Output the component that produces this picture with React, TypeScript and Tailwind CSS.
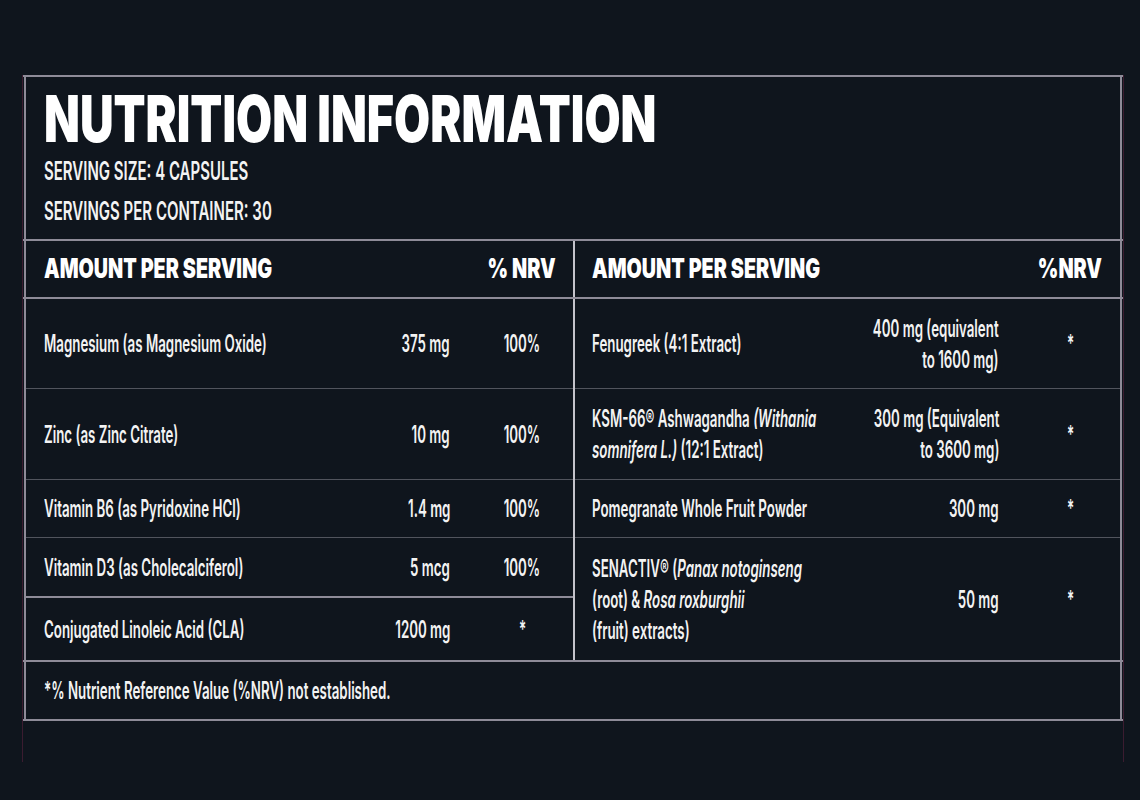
import React from "react";

const BODY =
  "inline-block whitespace-nowrap text-[24px] leading-[31px] font-semibold text-[#f3f3f3] scale-x-[0.555]";
const HEAD =
  "inline-block whitespace-nowrap text-[27px] leading-[32px] font-black text-white scale-x-[0.73]";

type Item = { h: string; name: React.ReactNode; amt: React.ReactNode; nrv: string };

const leftRows: Item[] = [
  { h: "h-[89px]", name: "Magnesium (as Magnesium Oxide)", amt: "375 mg", nrv: "100%" },
  { h: "h-[90px]", name: "Zinc (as Zinc Citrate)", amt: "10 mg", nrv: "100%" },
  { h: "h-[57px]", name: "Vitamin B6 (as Pyridoxine HCl)", amt: "1.4 mg", nrv: "100%" },
  { h: "h-[58px]", name: "Vitamin D3 (as Cholecalciferol)", amt: "5 mcg", nrv: "100%" },
];

const rightRows: Item[] = [
  {
    h: "h-[89px]",
    name: "Fenugreek (4:1 Extract)",
    amt: (
      <>
        400 mg (equivalent
        <br />
        to 1600 mg)
      </>
    ),
    nrv: "*",
  },
  {
    h: "h-[90px]",
    name: (
      <>
        KSM-66® Ashwagandha <i>(Withania</i>
        <br />
        <i>somnifera L.)</i> (12:1 Extract)
      </>
    ),
    amt: (
      <>
        300 mg (Equivalent
        <br />
        to 3600 mg)
      </>
    ),
    nrv: "*",
  },
  { h: "h-[57px]", name: "Pomegranate Whole Fruit Powder", amt: "300 mg", nrv: "*" },
  {
    h: "h-[122px]",
    name: (
      <>
        SENACTIV® (<i>Panax notoginseng</i>
        <br />
        (root) &amp; <i>Rosa roxburghii</i>
        <br />
        (fruit) extracts)
      </>
    ),
    amt: "50 mg",
    nrv: "*",
  },
];

function LeftRow({ r }: { r: Item }) {
  return (
    <div className={`flex w-[547px] items-center ${r.h}`}>
      <div className="w-0 min-w-0 flex-1 pl-[18px]">
        <span className={`${BODY} origin-left`}>{r.name}</span>
      </div>
      <div className="w-[140px] shrink-0 pr-[21px] text-right">
        <span className={`${BODY} origin-right`}>{r.amt}</span>
      </div>
      <div className="w-[102px] shrink-0 text-center">
        <span className={`${BODY} origin-center`}>{r.nrv}</span>
      </div>
    </div>
  );
}

function RightRow({ r }: { r: Item }) {
  return (
    <div className={`flex w-[545px] items-center ${r.h}`}>
      <div className="w-0 min-w-0 flex-1 pl-[17px]">
        <span className={`${BODY} origin-left`}>{r.name}</span>
      </div>
      <div className="w-[300px] shrink-0 pr-[21px] text-right">
        <span className={`${BODY} origin-right`}>{r.amt}</span>
      </div>
      <div className="w-[100px] shrink-0 text-center">
        <span className={`${BODY} origin-center`}>{r.nrv}</span>
      </div>
    </div>
  );
}

function Thin() {
  return <div className="h-px bg-[#51545d]" />;
}

function HLine() {
  return <div className="h-[2px] bg-[#8e8b98]" />;
}

export default function App() {
  return (
    <div className="min-h-[800px] w-full overflow-hidden bg-[#0f151d] pt-[75px] font-['Inter','Noto_Sans',sans-serif] text-white">
      <div className="ml-[22px] h-[687px] w-[1102px] border-x border-[#3b1c30]">
        <HLine />
        {/* header */}
        <div className="mx-px h-[162px] border-x-2 border-[#8e8b98] pl-[18px] pt-[10px]">
          <div>
            <span className="inline-block origin-left scale-x-[0.729] whitespace-nowrap text-[64px] leading-[64px] font-black text-white">
              NUTRITION INFORMATION
            </span>
          </div>
          <div>
            <span className="inline-block origin-left scale-x-[0.60] whitespace-nowrap text-[25px] leading-[40px] font-semibold text-[#f3f3f3]">
              SERVING SIZE: 4 CAPSULES
            </span>
          </div>
          <div>
            <span className="inline-block origin-left scale-x-[0.60] whitespace-nowrap text-[25px] leading-[40px] font-semibold text-[#f3f3f3]">
              SERVINGS PER CONTAINER: 30
            </span>
          </div>
        </div>
        <HLine />
        {/* column headers */}
        <div className="mx-px flex h-[56px] border-x-2 border-[#8e8b98]">
          <div className="flex w-[547px] shrink-0 items-center">
            <div className="w-0 min-w-0 flex-1 pl-[18px]">
              <span className={`${HEAD} origin-left`}>AMOUNT PER SERVING</span>
            </div>
            <div className="w-[102px] shrink-0 text-center">
              <span className={`${HEAD} origin-center`}>% NRV</span>
            </div>
          </div>
          <div className="w-[2px] shrink-0 bg-[#c4c3cb]" />
          <div className="flex w-[545px] shrink-0 items-center">
            <div className="w-0 min-w-0 flex-1 pl-[17px]">
              <span className={`${HEAD} origin-left`}>AMOUNT PER SERVING</span>
            </div>
            <div className="w-[100px] shrink-0 text-center">
              <span className={`${HEAD} origin-center`}>%NRV</span>
            </div>
          </div>
        </div>
        <HLine />
        {/* body */}
        <div className="mx-px flex h-[361px] border-x-2 border-[#8e8b98]">
          <div className="flex w-[547px] shrink-0 flex-col">
            <LeftRow r={leftRows[0]} />
            <Thin />
            <LeftRow r={leftRows[1]} />
            <Thin />
            <LeftRow r={leftRows[2]} />
            <Thin />
            <LeftRow r={leftRows[3]} />
            <HLine />
            <LeftRow
              r={{ h: "h-[62px]", name: "Conjugated Linoleic Acid (CLA)", amt: "1200 mg", nrv: "*" }}
            />
          </div>
          <div className="w-[2px] shrink-0 bg-[#c4c3cb]" />
          <div className="flex w-[545px] shrink-0 flex-col">
            <RightRow r={rightRows[0]} />
            <Thin />
            <RightRow r={rightRows[1]} />
            <Thin />
            <RightRow r={rightRows[2]} />
            <Thin />
            <RightRow r={rightRows[3]} />
          </div>
        </div>
        <HLine />
        {/* footnote */}
        <div className="mx-px flex h-[57px] items-center border-x-2 border-[#8e8b98] pl-[18px]">
          <span className={`${BODY} origin-left`}>
            *% Nutrient Reference Value (%NRV) not established.
          </span>
        </div>
        <HLine />
      </div>
    </div>
  );
}
